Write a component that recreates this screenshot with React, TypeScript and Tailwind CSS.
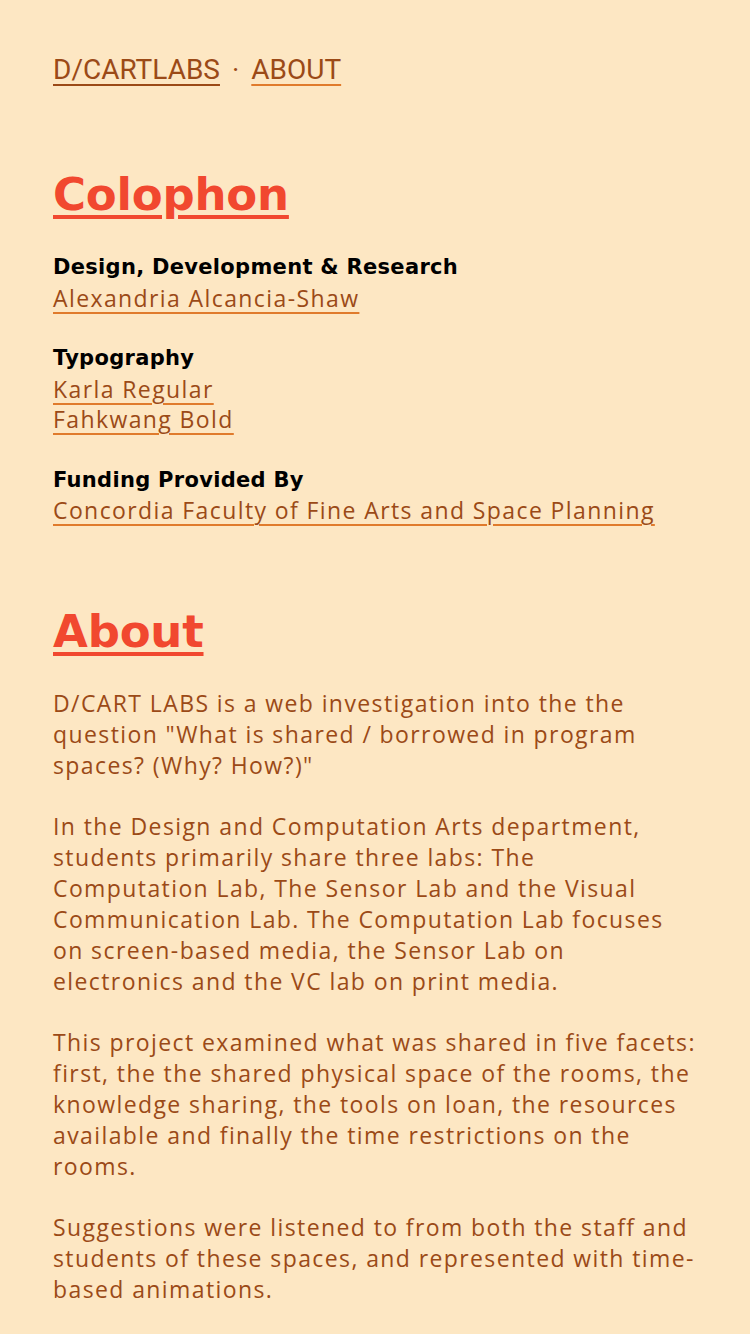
import React from "react";

const body = "font-['Open_Sans','Noto_Sans',sans-serif]";
const link = "text-[#9b4a17] underline decoration-[#e07b2c] decoration-2 underline-offset-[5px]";
const heading =
    "text-[45px] leading-[60px] font-bold text-[#f1482f] underline decoration-[4px] underline-offset-[5px] font-['DejaVu_Sans',sans-serif] tracking-[-0.2px]";
const label = "font-bold text-black text-[21px] tracking-[0.3px] font-['DejaVu_Sans',sans-serif]";

const App: React.FC = () => {
    return (
        <div className={`min-h-[1334px] bg-[#fde7c3] px-[53px] pt-[52px] pb-10 ${body}`}>
            <nav className="flex items-center gap-[12px] text-[28px] leading-[36px] text-[#9b4a17] font-['Roboto',sans-serif]">
                <a href="#" className="text-[#9b4a17] underline decoration-[#9b4a17] decoration-2 underline-offset-[5px]">D/CARTLABS</a>
                <span>·</span>
                <a href="#" className={link}>ABOUT</a>
            </nav>

            <h1 className={`mt-[77px] ${heading}`}>Colophon</h1>

            <div className="mt-[27px] text-[23px] leading-[30.5px] tracking-[1.4px]">
                <div className="mb-[30px]">
                    <h3 className={label}>Design, Development &amp; Research</h3>
                    <a href="#" className={link}>Alexandria Alcancia-Shaw</a>
                </div>
                <div className="mb-[30px]">
                    <h3 className={label}>Typography</h3>
                    <a href="#" className={`${link} block w-fit`}>Karla Regular</a>
                    <a href="#" className={`${link} block w-fit`}>Fahkwang Bold</a>
                </div>
                <div>
                    <h3 className={label}>Funding Provided By</h3>
                    <a href="#" className={link}>Concordia Faculty of Fine Arts and Space Planning</a>
                </div>
            </div>

            <h1 className={`mt-[76px] ${heading}`}>About</h1>

            <div className="mt-[26px] text-[23px] leading-[31px] tracking-[1.4px] text-[#9b4a17] space-y-[30px]">
                <p>D/CART LABS is a web investigation into the the question "What is shared / borrowed in program spaces? (Why? How?)"</p>
                <p>In the Design and Computation Arts department, students primarily share three labs: The Computation Lab, The Sensor Lab and the Visual Communication Lab. The Computation Lab focuses on screen-based media, the Sensor Lab on electronics and the VC lab on print media.</p>
                <p>This project examined what was shared in five facets: first, the the shared physical space of the rooms, the knowledge sharing, the tools on loan, the resources available and finally the time restrictions on the rooms.</p>
                <p>Suggestions were listened to from both the staff and students of these spaces, and represented with time-based animations.</p>
            </div>
        </div>
    );
};

export default App;
